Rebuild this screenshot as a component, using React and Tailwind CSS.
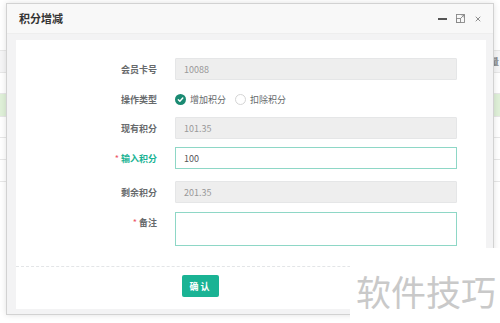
import { X } from 'lucide-react'

const FONT = { fontFamily: '"Noto Sans CJK SC", "Noto Sans", sans-serif' }

function Label({ children, required, active }) {
  return (
    <div className="w-[141px] shrink-0 text-right text-[9px] leading-[13px]">
      {required && <span className="mr-[2px] text-[#ed5565]">*</span>}
      <span className={`font-bold ${active ? 'text-[#1ab394]' : 'text-[#676a6c]'}`}>{children}</span>
    </div>
  )
}

function ReadOnly({ value }) {
  return (
    <div className="ml-[18px] flex h-[22px] w-[282px] items-center rounded-[1px] border border-[#e5e6e7] bg-[#eeeeee] pl-[8px] text-[9px] text-[#999]">
      {value}
    </div>
  )
}

function MaximizeIcon() {
  return (
    <svg width="9" height="9" viewBox="0 0 9 9" fill="none" stroke="#888" strokeWidth="0.9">
      <rect x="0.5" y="0.5" width="8" height="8" />
      <rect x="0.5" y="4.5" width="4" height="4" />
      <path d="M4.5 4.5 L8 1 M5.5 1 H8 V3.5" />
    </svg>
  )
}

export default function App() {
  return (
    <div className="relative h-[323px] w-[500px] overflow-hidden bg-white text-[9px] leading-[13px]" style={FONT}>
      {/* page behind the dialog */}
      <div className="pt-[50px]">
        <div className="flex h-[23px] items-center justify-end border-y border-[#e7e7e7] bg-[#f5f5f6] pr-[1px] font-bold text-[#888]">
          量
        </div>
        <div className="h-[21px] border-b border-[#e7e7e7]" />
        <div className="h-[23px] border-b border-[#e7e7e7] bg-[#dff0d8]" />
        <div className="h-[21px] border-b border-[#e7e7e7]" />
        <div className="h-[22px] border-b border-[#e7e7e7]" />
        <div className="h-[22px] border-b border-[#e7e7e7]" />
      </div>

      {/* dialog */}
      <div className="absolute left-[6px] top-[3px] flex h-[312px] w-[488px] flex-col border border-[#d2d2d2] bg-[#f3f3f4] shadow-[0_0_6px_rgba(0,0,0,0.12)]">
        <div className="flex h-[30px] shrink-0 items-center justify-between border-b border-[#eeeeee] bg-[#f8f8f8] pl-[12px] pr-[11px]">
          <span className="text-[11px] font-bold text-[#333]">积分增减</span>
          <div className="flex items-center gap-[9px] text-[#666]">
            <span className="h-[2px] w-[9px] bg-[#555]" />
            <MaximizeIcon />
            <X size={8} strokeWidth={2.2} />
          </div>
        </div>

        <div className="flex-1 pb-[5px] pl-[9px] pr-[7px] pt-[6px]">
          <div className="flex h-full flex-col bg-white">
            <div className="mt-[18px] flex items-center">
              <Label>会员卡号</Label>
              <ReadOnly value="10088" />
            </div>

            <div className="mt-[8px] flex h-[22px] items-center">
              <Label>操作类型</Label>
              <div className="ml-[18px] flex items-center text-[#676a6c]">
                <span className="flex h-[11px] w-[11px] items-center justify-center rounded-full bg-[#1a8a72]">
                  <svg width="7" height="7" viewBox="0 0 8 8" fill="none" stroke="#fff" strokeWidth="1.6" strokeLinecap="round" strokeLinejoin="round">
                    <path d="M1.5 4.2 L3.3 6 L6.6 2.2" />
                  </svg>
                </span>
                <span className="ml-[4px]">增加积分</span>
                <span className="ml-[9px] h-[11px] w-[11px] rounded-full border border-[#d5d5d5] bg-white" />
                <span className="ml-[4px]">扣除积分</span>
              </div>
            </div>

            <div className="mt-[7px] flex items-center">
              <Label>现有积分</Label>
              <ReadOnly value="101.35" />
            </div>

            <div className="mt-[8px] flex items-center">
              <Label required active>输入积分</Label>
              <div className="ml-[18px] flex h-[22px] w-[282px] items-center border border-[#8ed7c6] bg-white pl-[8px] text-[#555]">
                100
              </div>
            </div>

            <div className="mt-[12px] flex items-center">
              <Label>剩余积分</Label>
              <ReadOnly value="201.35" />
            </div>

            <div className="mt-[9px] flex items-start">
              <div className="pt-[4px]">
                <Label required>备注</Label>
              </div>
              <div className="ml-[18px] h-[34px] w-[282px] border border-[#8ed7c6] bg-white" />
            </div>

            <div className="mt-[20px] border-t border-dashed border-[#e3e5e7]" />

            <div className="mt-[8px] pl-[166px]">
              <button className="flex h-[22px] w-[37px] items-center justify-center rounded-[2px] bg-[#1ab394] font-bold tracking-[2px] text-white">
                确认
              </button>
            </div>
          </div>
        </div>
      </div>

      {/* watermark */}
      <div className="absolute bottom-0 right-0 flex h-[75px] w-[150px] items-center justify-end bg-white pr-[4px] pt-[10px]">
        <span className="text-[35px] leading-none text-[#c9c9c9]">软件技巧</span>
      </div>
    </div>
  )
}
